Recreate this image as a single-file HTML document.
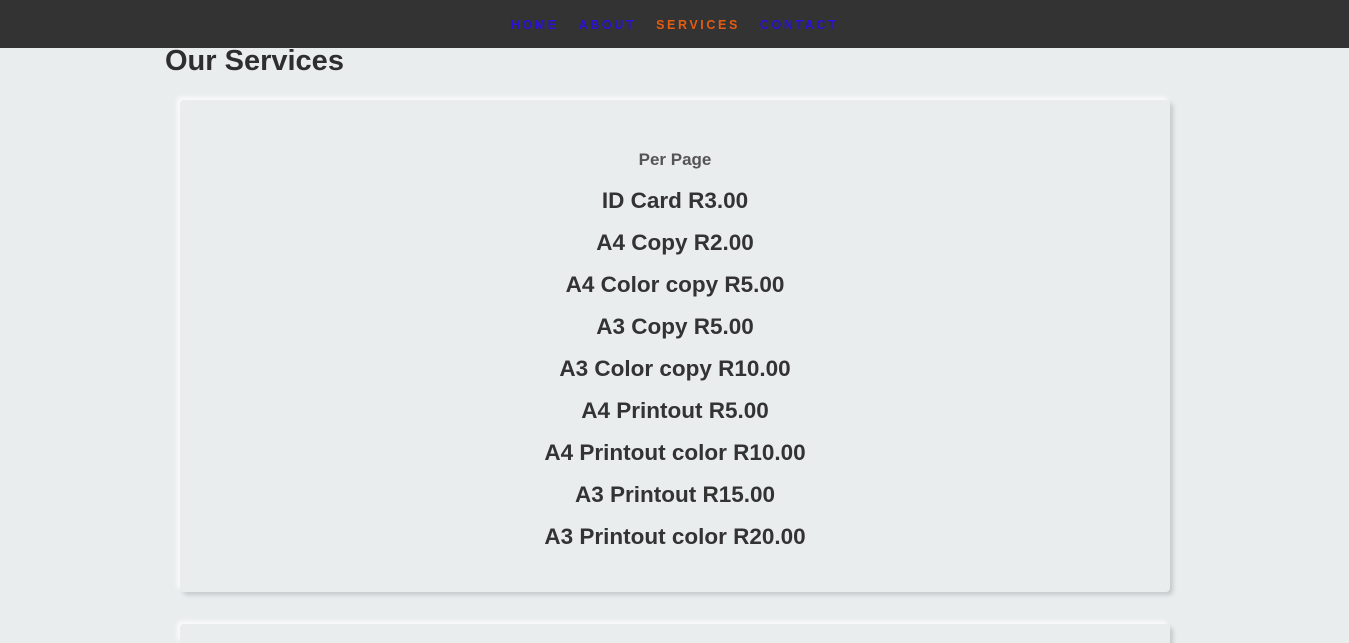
<!DOCTYPE html>
<html><head><style>
html,body{height:643px;overflow:hidden}
body{margin:0;background:#e9edee;font-family:"Liberation Sans",sans-serif;width:1349px;position:relative}
.nav{height:48px;background:#333;text-align:center;overflow:hidden}
.nav a{display:inline-block;margin:0 10px;line-height:50px;font-size:12.5px;font-weight:bold;letter-spacing:2.6px;color:#2a10d8;text-decoration:none}
.nav a.act{color:#e35c10}
h1{position:absolute;left:165px;top:45px;margin:0;font-size:29px;color:#2e2e2e}
.card{position:absolute;left:180px;width:990px;background:#e9edee;border-radius:4px;box-shadow:-3px -3px 4px #fafbfb,3px 3px 4px #c6c9ca}
.c1{top:100px;height:492px;text-align:center}
.c2{top:624px;height:19px;border-radius:4px 4px 0 0}
.pp{position:absolute;width:100%;font-size:17px;font-weight:bold;color:#555;margin:0}
.it{position:absolute;width:100%;font-size:22.5px;font-weight:bold;color:#333;margin:0;line-height:26px}
</style></head><body>
<div class="nav"><a>HOME</a><a>ABOUT</a><a class="act">SERVICES</a><a>CONTACT</a></div>
<h1>Our Services</h1>
<div class="card c1">
<p class="pp" style="top:50px">Per Page</p>
<p class="it" style="top:88px">ID Card R3.00</p>
<p class="it" style="top:130px">A4 Copy R2.00</p>
<p class="it" style="top:172px">A4 Color copy R5.00</p>
<p class="it" style="top:214px">A3 Copy R5.00</p>
<p class="it" style="top:256px">A3 Color copy R10.00</p>
<p class="it" style="top:298px">A4 Printout R5.00</p>
<p class="it" style="top:340px">A4 Printout color R10.00</p>
<p class="it" style="top:382px">A3 Printout R15.00</p>
<p class="it" style="top:424px">A3 Printout color R20.00</p>
</div>
<div class="card c2"></div>
</body></html>
